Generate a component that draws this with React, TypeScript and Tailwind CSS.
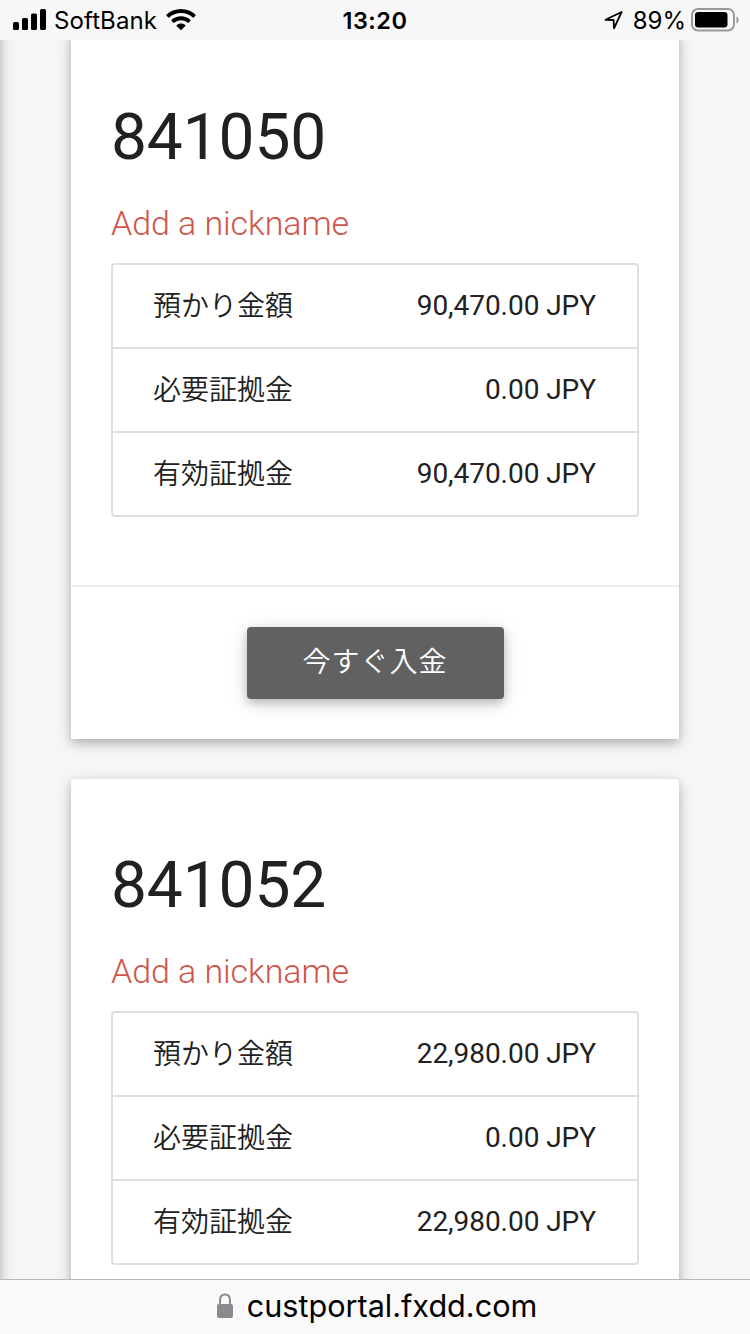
import React from 'react';

type Account = {
  id: string;
  rows: { label: string; value: string }[];
};

const accounts: Account[] = [
  {
    id: '841050',
    rows: [
      { label: '預かり金額', value: '90,470.00 JPY' },
      { label: '必要証拠金', value: '0.00 JPY' },
      { label: '有効証拠金', value: '90,470.00 JPY' },
    ],
  },
  {
    id: '841052',
    rows: [
      { label: '預かり金額', value: '22,980.00 JPY' },
      { label: '必要証拠金', value: '0.00 JPY' },
      { label: '有効証拠金', value: '22,980.00 JPY' },
    ],
  },
];

function SignalIcon() {
  return (
    <svg width="34" height="22" viewBox="0 0 34 22" className="ml-[13px]">
      <rect x="0" y="13" width="6" height="8" rx="1.6" />
      <rect x="9" y="9" width="6" height="12" rx="1.6" />
      <rect x="18" y="4.5" width="6" height="16.5" rx="1.6" />
      <rect x="27" y="0" width="6" height="21" rx="1.6" />
    </svg>
  );
}

function WifiIcon() {
  return (
    <svg width="30" height="22" viewBox="0 0 30 22" className="ml-[9px]">
      <path d="M15 0C9.300 0 4.200 2.100 .4 5.700c-.3.300-.3.600 0 .9l1.900 1.900c.3.300.6.300.9 0C6.400 5.500 10.500 4 15 4s8.600 1.500 11.800 4.500c.3.300.6.300.9 0l1.900-1.900c.3-.3.300-.6 0-.9C25.800 2.100 20.700 0 15 0z" />
      <path d="M15 7.300c-3.700 0-7 1.400-9.500 3.600-.3.300-.3.600 0 .9l1.900 1.900c.3.300.6.300.9 0C10.100 12.100 12.400 11.200 15 11.200s4.900.9 6.700 2.500c.3.300.6.300.9 0l1.900-1.900c.3-.3.300-.6 0-.9C22 8.700 18.700 7.300 15 7.300z" />
      <path d="M15 14.500c-1.600 0-3.200.6-4.300 1.500-.3.300-.3.600 0 .9l3.800 3.900c.3.300.7.300 1 0l3.800-3.900c.3-.3.300-.6 0-.9-1.100-.9-2.700-1.500-4.300-1.500z" />
    </svg>
  );
}

function StatusBar() {
  return (
    <header className="relative z-10 grid h-10 shrink-0 grid-cols-3 items-center bg-[#f7f7f7] font-['Inter',sans-serif] text-black">
      <div className="flex items-center">
        <SignalIcon />
        <span className="mt-px ml-[7px] text-[24px] leading-8 tracking-[0.1px]">SoftBank</span>
        <WifiIcon />
      </div>
      <span className="mt-px text-center text-[23.5px] leading-8 font-semibold tracking-[0.5px]">13:20</span>
      <div className="flex items-center justify-end">
        <svg width="20" height="20" viewBox="0 0 20 20" className="mr-[9px]" fill="none" stroke="currentColor" strokeWidth="1.8" strokeLinejoin="round">
          <path d="M1.500 9.800 17.600 2 10 18.300 9.600 10z" />
        </svg>
        <span className="mt-px text-[24px] leading-8">89%</span>
        <svg width="48" height="24" viewBox="0 0 48 24" className="mr-[11px] ml-[5px]">
          <rect x="1" y="1" width="42" height="21.500" rx="6" fill="none" stroke="#9a9a9a" strokeWidth="2" />
          <rect x="4" y="4" width="32.500" height="15.500" rx="3.200" />
          <path d="M45.500 8.500c1.700.6 2.200 2 2.200 3.500s-.5 2.900-2.200 3.500z" fill="#9a9a9a" />
        </svg>
      </div>
    </header>
  );
}

function AccountCard({ account }: { account: Account }) {
  return (
    <section className="h-[708px] w-[608px] shrink-0 rounded-t-[4px] bg-white shadow-[0_4px_10px_rgba(0,0,0,0.2),0_4px_20px_rgba(0,0,0,0.14)]">
      <div className="flex h-[554px] flex-col px-10 pt-[67px]">
        <h2 className="text-[64px] leading-[80px] font-normal tracking-[-0.1px]">{account.id}</h2>
        <a className="mt-[23px] block text-[34px] leading-[44px] font-light tracking-[-0.07px] text-[#d05548]">Add a nickname</a>
        <dl className="mt-[18px] divide-y-2 divide-[#dedede] rounded-[4px] border-2 border-[#dedede]">
          {account.rows.map((row) => (
            <div key={row.label} className="box-content flex h-[82px] items-center justify-between pr-[41px] pl-10 text-[28px]">
              <dt className="pb-1 font-['Noto_Sans_CJK_JP',sans-serif] leading-[78px] font-[350]">{row.label}</dt>
              <dd className="leading-[82px] tracking-[-0.05px]">{row.value}</dd>
            </div>
          ))}
        </dl>
      </div>
      <div className="flex h-[154px] items-start justify-center border-t-2 border-[#eeeeee] pt-10">
        <button className="h-[72px] w-[257px] rounded-[4px] bg-[#616161] pb-[7px] font-['Noto_Sans_CJK_JP',sans-serif] text-[28px] font-[350] tracking-[1px] text-white shadow-[0_4px_10px_rgba(0,0,0,0.2),0_4px_20px_rgba(0,0,0,0.14)]">
          今すぐ入金
        </button>
      </div>
    </section>
  );
}

function AddressBar() {
  return (
    <footer className="relative z-10 flex h-[55px] shrink-0 items-center justify-center border-t border-[#b8b8b8] bg-[#f9f9f9] pb-0.5 pl-[3px] font-['Inter',sans-serif] text-black">
      <svg width="18" height="26" viewBox="0 0 18 26" className="mr-[13px]">
        <path d="M4 12V7.200C4 3.500 6 1.500 9 1.500s5 2 5 5.700V12" fill="none" stroke="#8b8b8f" strokeWidth="2" />
        <rect x="1" y="11" width="16" height="14" rx="2" fill="#8b8b8f" />
      </svg>
      <span className="text-[30.6px] leading-9 font-normal">custportal.fxdd.com</span>
    </footer>
  );
}

export default function App() {
  return (
    <div className="flex h-[1334px] w-[750px] flex-col overflow-hidden bg-[#f7f7f7] font-['Roboto',sans-serif] text-[#212121]">
      <StatusBar />
      <main className="relative min-h-0 flex-1 overflow-hidden">
        {/* Edge shadow of the closed side menu */}
        <div className="absolute -inset-y-5 -left-5 w-5 shadow-[0_4px_10px_rgba(0,0,0,0.2),0_4px_20px_rgba(0,0,0,0.14)]" />
        <div className="-mt-[9px] flex flex-col gap-10 pl-[71px]">
          {accounts.map((account) => (
            <AccountCard key={account.id} account={account} />
          ))}
        </div>
      </main>
      <AddressBar />
    </div>
  );
}
